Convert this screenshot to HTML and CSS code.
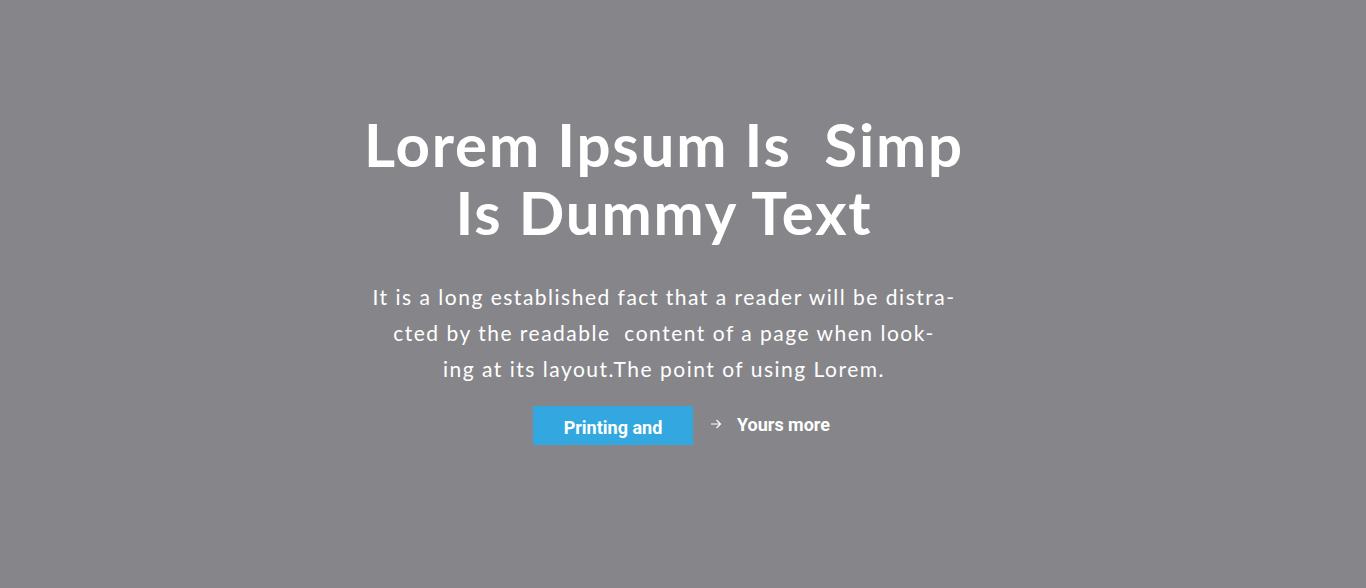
FILE: index.html
```html
<!DOCTYPE html>
<html>
<head>
<meta charset="utf-8">
<link rel="stylesheet" href="styles.css">
</head>
<body>
<section class="hero">
  <div class="content">
    <h1 class="title">Lorem Ipsum Is&nbsp; Simp<br>Is Dummy Text</h1>
    <p class="lead">It is a long established fact that a reader will be distra-<br>cted by the readable&nbsp; content of a page when look-<br>ing at its layout.The point of using Lorem.</p>
    <div class="actions">
      <a class="btn-primary" href="#">Printing and</a>
      <a class="btn-link" href="#"><svg class="arrow" width="12" height="10" viewBox="0 0 12 10"><path d="M1 5h9.5M6.5 1l4 4-4 4" fill="none" stroke="#fff" stroke-width="1.2"/></svg><span>Yours more</span></a>
    </div>
  </div>
</section>
</body>
</html>
```
FILE: styles.css
```css
html, body { margin: 0; padding: 0; }
body { background: #86868a; height: 588px; overflow: hidden; }
.hero { display: flex; justify-content: center; padding-top: 110px; padding-right: 38px; }
.content { display: flex; flex-direction: column; align-items: center; text-align: center; }
.title { margin: 0; color: #fff; font-family: "Lato", sans-serif; font-weight: 700; font-size: 60px; line-height: 68px; letter-spacing: 1.8px; }
.lead { margin: 33px 0 0; color: #fff; font-family: "Lato", sans-serif; font-weight: 400; font-size: 21px; line-height: 36px; letter-spacing: 1.5px; }
.actions { display: flex; align-items: center; margin-top: 19px; margin-left: 35px; }
.btn-primary { display: flex; align-items: center; justify-content: center; width: 160px; height: 39px; background: #33a8e0; color: #fff; font-family: "Roboto", sans-serif; font-weight: 700; font-size: 18px; text-decoration: none; padding-top: 3px; box-sizing: border-box; }
.btn-link { display: flex; align-items: center; margin-left: 17px; color: #fff; font-family: "Roboto", sans-serif; font-weight: 700; font-size: 18px; text-decoration: none; margin-top: -3px; }
.arrow { margin-right: 15px; }
```
